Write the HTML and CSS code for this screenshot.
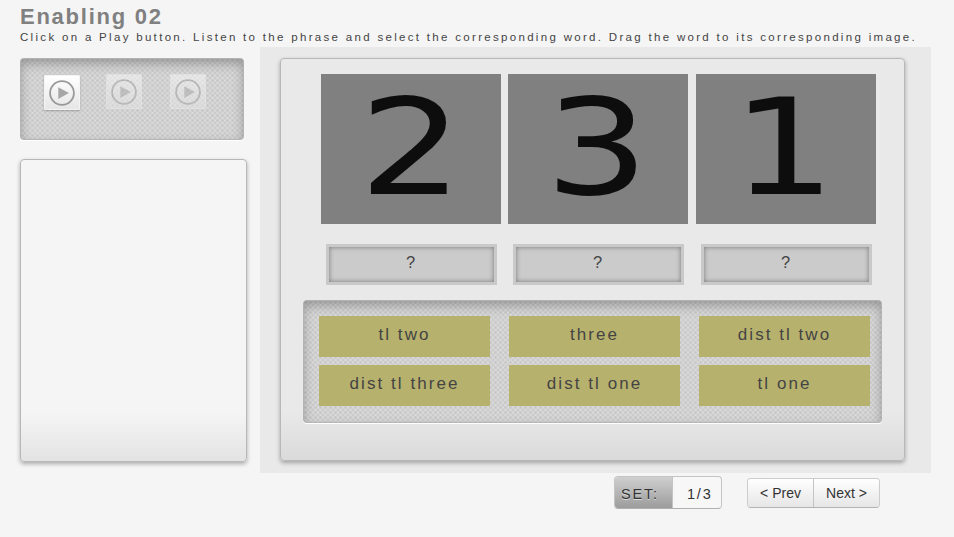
FILE: index.html
```html
<!DOCTYPE html>
<html lang="en">
<head>
<meta charset="utf-8">
<title>Enabling 02</title>
<link rel="stylesheet" href="styles.css">
</head>
<body>
<svg class="defs" width="0" height="0" aria-hidden="true">
  <symbol id="play" viewBox="0 0 26 26">
    <circle cx="13" cy="13" r="11.9" fill="none" stroke="#999" stroke-width="1.8"/>
    <path d="M9.3 7.3v11.6L19.9 13.1z" fill="#a6a6a6"/>
  </symbol>
</svg>
<header>
  <h1>Enabling 02</h1>
  <p>Click on a Play button. Listen to the phrase and select the corresponding word. Drag the word to its corresponding image.</p>
</header>
<main>
  <aside>
    <div class="well players">
      <button class="play active" aria-label="Play 1"><svg><use href="#play"/></svg></button>
      <button class="play" aria-label="Play 2"><svg><use href="#play"/></svg></button>
      <button class="play" aria-label="Play 3"><svg><use href="#play"/></svg></button>
    </div>
    <div class="card notes"></div>
  </aside>
  <section class="stage">
    <div class="card board">
      <div class="images">
        <svg class="image"><text transform="translate(38.1 120) scale(1.22 1)">2</text></svg>
        <svg class="image"><text transform="translate(37 120) scale(1.22 1)">3</text></svg>
        <svg class="image"><text transform="translate(35.7 120) scale(1.22 1)">1</text></svg>
      </div>
      <div class="slots">
        <div class="slot">?</div>
        <div class="slot">?</div>
        <div class="slot">?</div>
      </div>
      <div class="well words">
        <div class="word">tl two</div>
        <div class="word">three</div>
        <div class="word">dist tl two</div>
        <div class="word">dist tl three</div>
        <div class="word">dist tl one</div>
        <div class="word">tl one</div>
      </div>
    </div>
  </section>
</main>
<footer>
  <div class="set"><span class="label">SET:</span><span class="count">1/3</span></div>
  <nav><button>&lt; Prev</button><button>Next &gt;</button></nav>
</footer>
</body>
</html>
```
FILE: styles.css
```css
* { box-sizing: border-box; }
body {
  margin: 0;
  background: #f5f5f5;
  color: #444;
  font-family: "Liberation Sans", Arial, sans-serif;
}
.defs { position: absolute; }
header { height: 47px; padding: 4px 0 0 20px; }
h1 {
  margin: 0;
  font-size: 22px;
  line-height: 26px;
  letter-spacing: 1.75px;
  color: #808080;
}
p {
  margin: 0;
  font-size: 11.5px;
  line-height: 14px;
  letter-spacing: 2.31px;
  white-space: nowrap;
}
main { display: flex; padding-left: 20px; }
aside { width: 240px; padding-top: 11px; }
.well {
  border-radius: 4px;
  background-color: #dadada;
  background-image:
    radial-gradient(circle, #c6c6c6 .9px, transparent 1.6px),
    radial-gradient(circle, #c6c6c6 .9px, transparent 1.6px);
  background-size: 5px 5px;
  background-position: 0 0, 2.5px 2.5px;
  box-shadow: inset 0 0 1px 1px #b4b4b4, inset 0 5px 12px rgba(0, 0, 0, .3), 0 1px 0 #fff;
}
.players { display: flex; width: 224px; height: 82px; padding: 16px 0 0 24px; }
.play {
  display: flex;
  align-items: center;
  justify-content: center;
  width: 36px;
  height: 35px;
  padding: 0;
  margin-right: 28px;
  border: 1px solid #f4f4f4;
  border-radius: 1px;
  background: linear-gradient(#fff, #e6e6e6);
  opacity: .45;
}
.play.active { margin: 1px 26px 0 0; opacity: 1; box-shadow: 0 1px 2px rgba(0, 0, 0, .25); }
.play svg { display: block; width: 26px; height: 26px; }
.card {
  border: 1px solid #b8b8b8;
  border-radius: 4px;
  box-shadow: 0 2px 4px rgba(0, 0, 0, .3);
}
.notes {
  width: 227px;
  height: 303px;
  margin-top: 19px;
  background: linear-gradient(#f5f5f5 84%, #e3e3e3);
}
.stage { width: 671px; height: 426px; padding: 11px 0 0 20px; background: #e9e9e9; }
.board {
  width: 625px;
  height: 403px;
  padding: 15px 22px 0;
  background: linear-gradient(#e9e9e9 88%, #dadada);
}
.images { display: grid; grid-template-columns: 187px 188px 180px; padding-left: 18px; }
.image { width: 180px; height: 150px; background: #808080; overflow: visible; }
.image text { font: 134px "DejaVu Sans", sans-serif; fill: #0d0d0d; }
.slots { display: grid; grid-template-columns: 187px 188px 171px; padding: 20px 0 0 23px; }
.slot {
  width: 171px;
  height: 41px;
  border: 3px solid #c9c9c9;
  background: #cbcbcb;
  box-shadow: inset 0 0 5px #777;
  font-size: 16.5px;
  line-height: 31px;
  letter-spacing: 2px;
  text-align: center;
}
.words {
  display: grid;
  grid-template-columns: repeat(3, 171px);
  gap: 8px 19px;
  align-content: start;
  width: 579px;
  height: 123px;
  margin-top: 15px;
  padding: 16px;
}
.word {
  height: 41px;
  background: #b7b16e;
  font-size: 17px;
  line-height: 37px;
  letter-spacing: 2.05px;
  text-align: center;
}
footer { display: flex; align-items: flex-start; padding: 3px 0 0 614px; }
.set {
  display: flex;
  width: 108px;
  height: 33px;
  border: 1px solid #c4c4c4;
  border-bottom-color: #b0b0b0;
  border-radius: 4px;
  overflow: hidden;
  background: #f7f7f7;
  color: #333;
  font-size: 14.5px;
  line-height: 34px;
  letter-spacing: 1.8px;
}
.label {
  width: 58px;
  padding-left: 6px;
  border-right: 1px solid #c4c4c4;
  background: linear-gradient(#cfcfcf, #9c9c9c);
  text-shadow: 0 1px 0 rgba(255, 255, 255, .6);
}
.count { padding-left: 14px; }
nav {
  display: flex;
  width: 133px;
  height: 30px;
  margin: 2px 0 0 25px;
  border: 1px solid #ccc;
  border-bottom-color: #b3b3b3;
  border-radius: 4px;
  overflow: hidden;
}
nav button {
  flex: 1;
  padding: 0;
  border: 0;
  background: linear-gradient(#fff, #e6e6e6);
  color: #333;
  font: 14px/28px "Liberation Sans", Arial, sans-serif;
}
nav button + button { border-left: 1px solid #c4c4c4; }
```
